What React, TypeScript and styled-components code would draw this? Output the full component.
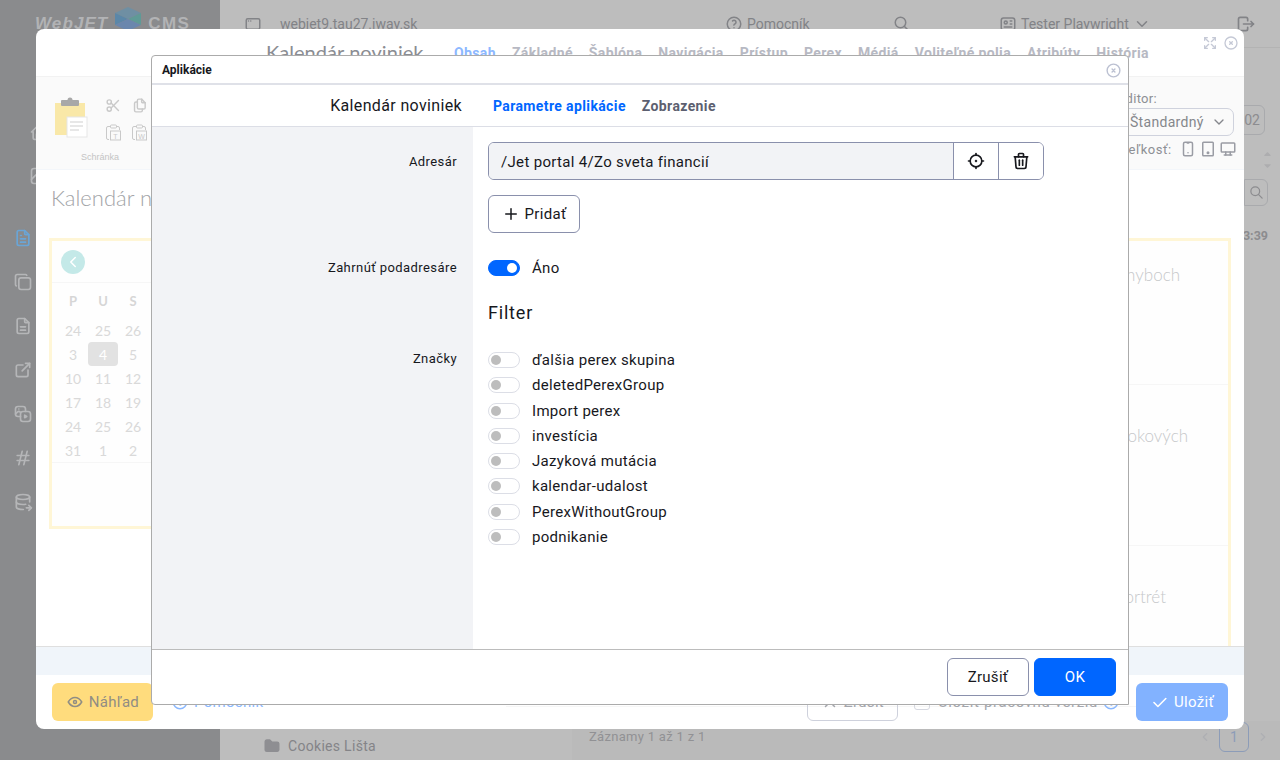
import { createGlobalStyle, styled } from "styled-components";
import {
  TbAppWindow,
  TbArrowsMaximize,
  TbCaretDownFilled,
  TbCaretUpFilled,
  TbCheck,
  TbChevronDown,
  TbChevronLeft,
  TbChevronRight,
  TbCircleX,
  TbCopy,
  TbDatabaseExport,
  TbDeviceDesktop,
  TbDeviceMobile,
  TbDeviceTablet,
  TbExternalLink,
  TbEye,
  TbFileDescription,
  TbFiles,
  TbFileText,
  TbFocus2,
  TbFolderFilled,
  TbHash,
  TbHelp,
  TbHome,
  TbId,
  TbInfoCircle,
  TbLogout,
  TbPhoto,
  TbPhotoVideo,
  TbPlus,
  TbScissors,
  TbSearch,
  TbTrash,
  TbX,
} from "react-icons/tb";

const UI_FONT = `Roboto, "Liberation Sans", sans-serif`;
const LIGHT_FONT = `Lato, "Liberation Sans", sans-serif`;

const GlobalStyle = createGlobalStyle`
  html, body {
    margin: 0;
    padding: 0;
    height: 760px;
    overflow: hidden;
    font-family: ${UI_FONT};
  }
  * { box-sizing: border-box; }
`;

const Page = styled.div`
  position: relative;
  width: 1280px;
  height: 760px;
  overflow: hidden;
  display: grid;
  grid-template-columns: 220px 1fr;
  background: #bdbdbd;
`;

/* ---------- page behind the dialogs ---------- */

const Sidebar = styled.aside`
  background: #8a8b8d;
  color: #b5b6b8;
  display: flex;
  flex-direction: column;
`;

const Logo = styled.div`
  height: 48px;
  padding-left: 35px;
  display: flex;
  align-items: center;
  gap: 6px;
  font-family: "Liberation Sans", sans-serif;
  font-size: 17px;
  font-weight: 700;
  color: #b2b3b5;
  svg {
    margin-top: -10px;
  }
`;

const LogoWord = styled.span`
  font-style: italic;
  letter-spacing: 1.1px;
`;

const LogoCms = styled.span`
  letter-spacing: 1.4px;
`;

const SideNav = styled.nav`
  display: flex;
  flex-direction: column;
  padding-top: 62px;
`;

const SideItem = styled.div<{ $indent?: boolean; $active?: boolean; $gap?: number }>`
  height: 44px;
  display: flex;
  align-items: center;
  padding-left: ${(p) => (p.$indent ? 29 : 13)}px;
  margin-bottom: ${(p) => p.$gap ?? 0}px;
  font-size: 20px;
  color: ${(p) => (p.$active ? "#6aa5d6" : "#b5b6b8")};
`;

const Main = styled.main`
  display: flex;
  flex-direction: column;
  min-width: 0;
`;

const TopBar = styled.header`
  height: 48px;
  flex-shrink: 0;
  display: flex;
  align-items: center;
  padding-left: 24px;
  font-size: 14px;
  color: #828387;
  border-bottom: 1px solid #b3b3b3;
`;

const TopItem = styled.div<{ $width: number }>`
  width: ${(p) => p.$width}px;
  flex-shrink: 0;
  display: flex;
  align-items: center;
  gap: 4px;
  svg {
    font-size: 18px;
    flex-shrink: 0;
  }
`;

const TopSpacedIcon = styled.span`
  width: 36px;
  display: flex;
`;

const BackTools = styled.div`
  flex: 1;
  display: flex;
  flex-direction: column;
  align-items: flex-end;
  padding: 57px 12px 0 0;
  color: #8c8c8f;
`;

const PageInput = styled.div`
  width: 26px;
  height: 30px;
  border: 1px solid #a9aaad;
  border-radius: 6px;
  margin-right: 3px;
  display: flex;
  align-items: center;
  justify-content: flex-end;
  padding-right: 4px;
  font-size: 14px;
`;

const SortArrows = styled.div`
  display: flex;
  flex-direction: column;
  font-size: 11px;
  line-height: 6px;
  color: #adadaf;
  margin: 14px -5px 8px 0;
  svg {
    display: block;
  }
`;

const SearchBox = styled.div`
  width: 24px;
  height: 27px;
  border: 1px solid #a9aaad;
  border-radius: 0 6px 6px 0;
  display: flex;
  align-items: center;
  justify-content: center;
  font-size: 15px;
`;

const TimeText = styled.div`
  margin-top: 22px;
  font-size: 12.5px;
  font-weight: 700;
`;

const BackFooter = styled.div`
  height: 39px;
  flex-shrink: 0;
  display: flex;
  color: #848488;
  font-size: 14px;
  letter-spacing: 0.3px;
`;

const FolderRow = styled.div`
  width: 352px;
  padding-left: 43px;
  padding-top: 10px;
  display: flex;
  align-items: center;
  gap: 7px;
  svg {
    font-size: 18px;
    color: #8e8e92;
  }
`;

const ListInfo = styled.div`
  flex: 1;
  display: flex;
  align-items: flex-start;
  background: #bababa;
`;

const RecordInfo = styled.div`
  padding: 8px 0 0 17px;
  line-height: 16px;
  font-size: 13px;
  color: #919194;
  flex: 1;
`;

const Pager = styled.div`
  display: flex;
  align-items: center;
  gap: 7px;
  padding: 1px 10px 0 0;
  color: #aeafb3;
`;

const PageNum = styled.div`
  width: 30px;
  height: 30px;
  border: 1px solid #8c9cb8;
  border-radius: 6px;
  color: #8c9cb8;
  display: flex;
  align-items: center;
  justify-content: center;
`;

/* ---------- page editor dialog ---------- */

const EditorDialog = styled.section`
  position: absolute;
  left: 36px;
  top: 29px;
  width: 1208px;
  height: 700px;
  background: #fff;
  border-radius: 8px;
  overflow: hidden;
  display: flex;
  flex-direction: column;
`;

const EditorHeader = styled.div`
  height: 47px;
  flex-shrink: 0;
  padding: 10px 5px 0 230px;
  display: flex;
  align-items: flex-start;
`;

const EditorTitle = styled.div`
  font-family: ${LIGHT_FONT};
  font-size: 20px;
  line-height: 26px;
  color: #8b8d93;
  letter-spacing: 0.05px;
  width: 188px;
`;

const EditorTabs = styled.div`
  display: flex;
  gap: 16px;
  padding-top: 6px;
  flex: 1;
`;

const EditorTab = styled.span<{ $active?: boolean }>`
  font-size: 14px;
  line-height: 16px;
  font-weight: 700;
  letter-spacing: 0.37px;
  white-space: nowrap;
  color: ${(p) => (p.$active ? "#8cb8ff" : "#b7b9c3")};
`;

const EditorHeadIcons = styled.div`
  display: flex;
  gap: 5px;
  margin-top: -4px;
  font-size: 16px;
  color: #c5c9d6;
  svg {
    display: block;
  }
`;

const Ribbon = styled.div`
  height: 94px;
  flex-shrink: 0;
  background: #fafafa;
  border-top: 1px solid #f2f2f2;
  border-bottom: 1px solid #f3f6fa;
  padding: 0 10px 0 19px;
  display: flex;
  justify-content: space-between;
`;

const ClipGroup = styled.div`
  display: grid;
  grid-template-columns: 32px 46px;
  column-gap: 18px;
  padding-top: 20px;
  width: 100px;
`;

const ClipActions = styled.div`
  display: grid;
  grid-template-columns: 26px 18px;
  row-gap: 10px;
  font-size: 17px;
  color: #c9c9c9;
  align-content: start;
  svg {
    display: block;
  }
`;

const ClipLabel = styled.div`
  grid-column: 1 / -1;
  font-family: "Liberation Sans", sans-serif;
  font-size: 9px;
  color: #c4c4c4;
  text-align: center;
  margin-top: 4px;
  padding-right: 6px;
`;

const EditorMode = styled.div`
  width: 124px;
  padding-top: 13px;
  font-size: 13px;
  letter-spacing: 0.3px;
  color: #8d8f94;
`;

const ModeLabel = styled.div`
  padding-left: 8px;
  line-height: 17px;
`;

const ModeSelect = styled.div`
  height: 28px;
  margin-top: 1px;
  border: 1px solid #cfd2dd;
  border-radius: 7px;
  padding: 0 6px 0 19px;
  display: flex;
  align-items: center;
  justify-content: space-between;
  color: #85878c;
  font-size: 14px;
  svg {
    font-size: 16px;
  }
`;

const SizeRow = styled.div`
  display: flex;
  align-items: center;
  gap: 2px;
  margin-top: 4px;
  padding-left: 10px;
  white-space: nowrap;
  svg {
    font-size: 18px;
    color: #9a9ca4;
    flex-shrink: 0;
  }
`;

const SizeText = styled.span`
  margin-right: 5px;
  letter-spacing: 0.55px;
`;

const EditorBody = styled.div`
  flex: 1;
  min-height: 0;
  padding: 16px 13px 0 13px;
  display: flex;
  flex-direction: column;
`;

const PageHeading = styled.h2`
  margin: 0;
  padding-left: 2px;
  font-family: ${LIGHT_FONT};
  font-weight: 300;
  font-size: 22px;
  line-height: 24px;
  color: #a2a4a7;
  white-space: nowrap;
`;

const Columns = styled.div`
  margin-top: 28px;
  flex: 1;
  min-height: 0;
  display: grid;
  grid-template-columns: 440px 1fr;
  gap: 14px;
  align-items: start;
`;

const Frame = styled.div<{ $height: number }>`
  height: ${(p) => p.$height}px;
  border: 3px solid #fff6d6;
  background: #fefefe;
`;

const ArticleFrame = styled(Frame)`
  border-bottom: 0;
`;

const CalendarNav = styled.div`
  height: 42px;
  border-bottom: 1px solid #f6f6f6;
  padding: 9px 0 0 9px;
`;

const PrevButton = styled.div`
  width: 24px;
  height: 24px;
  border-radius: 50%;
  background: #c4e9e8;
  color: #fff;
  font-size: 18px;
  display: flex;
  align-items: center;
  justify-content: center;
`;

const WeekGrid = styled.div`
  display: grid;
  grid-template-columns: repeat(3, 30px);
  padding: 0 0 0 6px;
  border-bottom: 1px solid #f6f6f6;
`;

const DayName = styled.div`
  height: 35px;
  display: flex;
  align-items: center;
  justify-content: center;
  font-family: ${LIGHT_FONT};
  font-weight: 700;
  font-size: 13px;
  color: #d6d6d6;
`;

const Day = styled.div<{ $today?: boolean }>`
  height: 24px;
  display: flex;
  align-items: center;
  justify-content: center;
  border-radius: 4px;
  font-family: ${LIGHT_FONT};
  font-weight: 400;
  font-size: 14px;
  color: ${(p) => (p.$today ? "#fff" : "#d9d9d9")};
  background: ${(p) => (p.$today ? "#e2e2e2" : "transparent")};
`;

const ArticleRow = styled.div<{ $height: number; $inset: number }>`
  height: ${(p) => p.$height}px;
  border-bottom: 1px solid #f6f6f6;
  padding: ${(p) => p.$height - 121}px ${(p) => p.$inset}px 0 0;
  text-align: right;
  font-family: ${LIGHT_FONT};
  font-weight: 300;
  font-size: 17px;
  line-height: 22px;
  color: #c6c8ca;
  white-space: nowrap;
`;

const EditorStrip = styled.div`
  height: 29px;
  flex-shrink: 0;
  background: #f0f5fa;
  border-top: 1px solid #dfdfdf;
`;

const EditorFooter = styled.div`
  height: 54px;
  flex-shrink: 0;
  padding: 8px 16px 0;
  display: flex;
  align-items: flex-start;
  font-size: 15px;
  letter-spacing: 0.3px;
`;

const PreviewButton = styled.div`
  width: 101px;
  height: 38px;
  border-radius: 6px;
  background: #ffdc7d;
  color: #908d84;
  display: flex;
  align-items: center;
  justify-content: center;
  gap: 5px;
  svg {
    font-size: 18px;
  }
`;

const HelpLink = styled.div`
  margin-left: 18px;
  height: 38px;
  display: flex;
  align-items: center;
  gap: 5px;
  color: #8ab8ff;
  flex: 1;
  svg {
    font-size: 18px;
  }
`;

const GhostButton = styled.div`
  width: 91px;
  height: 38px;
  border: 1px solid #ced1dc;
  border-radius: 6px;
  color: #a4a6ac;
  display: flex;
  align-items: center;
  justify-content: center;
  gap: 5px;
  svg {
    font-size: 18px;
  }
`;

const WorkCopy = styled.div`
  margin-left: 16px;
  width: 222px;
  height: 38px;
  display: flex;
  align-items: center;
  color: #a4a6ac;
  letter-spacing: 0.6px;
  white-space: nowrap;
  svg {
    font-size: 18px;
    color: #8ab8ff;
    margin-left: 4px;
  }
`;

const CheckBox = styled.span`
  width: 16px;
  height: 16px;
  border: 1px solid #d6d8e0;
  border-radius: 3px;
  margin-right: 8px;
  flex-shrink: 0;
`;

const SaveButton = styled.div`
  width: 92px;
  height: 38px;
  border-radius: 6px;
  background: #82b2ff;
  color: #fff;
  display: flex;
  align-items: center;
  justify-content: center;
  gap: 5px;
  svg {
    font-size: 19px;
  }
`;

/* ---------- application dialog ---------- */

const AppDialog = styled.section`
  position: absolute;
  left: 151px;
  top: 55px;
  width: 978px;
  height: 650px;
  background: #fff;
  border: 1px solid #ababab;
  border-radius: 4px 4px 0 4px;
  overflow: hidden;
  display: flex;
  flex-direction: column;
  color: #17181d;
`;

const AppHeader = styled.div`
  height: 29px;
  flex-shrink: 0;
  border-bottom: 2px solid #dfe1e8;
  padding: 1px 6px 0 10px;
  display: flex;
  align-items: center;
  justify-content: space-between;
`;

const AppTitle = styled.div`
  font-size: 12px;
  font-weight: 700;
`;

const AppClose = styled.div`
  font-size: 17px;
  color: #bcc1d2;
  display: flex;
`;

const AppTabBar = styled.div`
  height: 42px;
  flex-shrink: 0;
  border-bottom: 1px solid #dcdee6;
  display: grid;
  grid-template-columns: 321px 1fr;
  align-items: center;
`;

const AppTabTitle = styled.div`
  font-size: 16px;
  letter-spacing: 0.35px;
  text-align: right;
  padding-right: 11px;
`;

const AppTabs = styled.div`
  display: flex;
  gap: 16px;
  padding-left: 20px;
`;

const AppTab = styled.span<{ $active?: boolean }>`
  font-size: 14px;
  font-weight: 700;
  letter-spacing: 0.38px;
  color: ${(p) => (p.$active ? "#0066ff" : "#5c5f70")};
`;

const FormArea = styled.div`
  flex: 1;
  min-height: 0;
  display: grid;
  grid-template-columns: 321px 1fr;
  grid-auto-rows: min-content;
  background: linear-gradient(to right, #f2f3f6 321px, #fff 321px);
`;

const FieldLabel = styled.div<{ $top: number }>`
  padding: ${(p) => p.$top}px 16px 0 0;
  text-align: right;
  font-size: 13px;
  line-height: 18px;
  letter-spacing: 0.42px;
`;

const FieldCell = styled.div<{ $top: number }>`
  padding: ${(p) => p.$top}px 0 0 15px;
`;

const PathGroup = styled.div`
  width: 556px;
  height: 38px;
  border: 1px solid #8a90ac;
  border-radius: 6px;
  display: flex;
  overflow: hidden;
`;

const PathValue = styled.div`
  flex: 1;
  background: #f2f3f6;
  display: flex;
  align-items: center;
  padding: 1px 0 0 12px;
  font-size: 15px;
  letter-spacing: 0.32px;
`;

const PathAction = styled.div`
  width: 45px;
  border-left: 1px solid #8a90ac;
  background: #fff;
  display: flex;
  align-items: center;
  justify-content: center;
  font-size: 20px;
  color: #17181d;
`;

const AddButton = styled.div`
  margin-top: 15px;
  width: 92px;
  height: 38px;
  border: 1px solid #8a90ac;
  border-radius: 6px;
  display: flex;
  align-items: center;
  justify-content: center;
  gap: 5px;
  font-size: 15px;
  letter-spacing: 0.3px;
  svg {
    font-size: 18px;
  }
`;

const SwitchRow = styled.div`
  height: 25.3px;
  display: flex;
  align-items: center;
  gap: 12px;
  font-size: 15px;
  letter-spacing: 0.3px;
`;

const Track = styled.span<{ $on?: boolean }>`
  position: relative;
  width: 32px;
  height: 16px;
  flex-shrink: 0;
  border-radius: 8px;
  background: ${(p) => (p.$on ? "#0066ff" : "#fff")};
  border: 1px solid ${(p) => (p.$on ? "#0066ff" : "#dcdee6")};
`;

const Thumb = styled.span<{ $on?: boolean }>`
  position: absolute;
  top: 2px;
  left: ${(p) => (p.$on ? 18 : 2)}px;
  width: 10px;
  height: 10px;
  border-radius: 50%;
  background: ${(p) => (p.$on ? "#fff" : "#bdbdbd")};
`;

const SectionTitle = styled.h3`
  grid-column: 2;
  margin: 0;
  padding: 20px 0 0 15px;
  font-size: 18px;
  line-height: 26px;
  font-weight: 400;
  letter-spacing: 0.8px;
`;

const AppFooter = styled.div`
  height: 55px;
  flex-shrink: 0;
  border-top: 1px solid #bcbcbc;
  padding: 8px 12px 0 0;
  display: flex;
  justify-content: flex-end;
  gap: 5px;
`;

const DialogButton = styled.div<{ $primary?: boolean }>`
  width: 82px;
  height: 38px;
  border-radius: 6px;
  border: 1px solid ${(p) => (p.$primary ? "#0066ff" : "#8a90ac")};
  background: ${(p) => (p.$primary ? "#0066ff" : "#fff")};
  color: ${(p) => (p.$primary ? "#fff" : "#17181d")};
  display: flex;
  align-items: center;
  justify-content: center;
  font-size: 15px;
  letter-spacing: 0.3px;
`;

/* drawings */

function LogoCube() {
  return (
    <svg width="28" height="24" viewBox="0 0 28 24" aria-hidden="true">
      <polygon points="14,0 27,6 14,12 1,6" fill="#6f8fa3" />
      <polygon points="1,6 14,12 1,18" fill="#5b87a8" />
      <polygon points="27,6 14,12 27,18" fill="#5f9a96" />
      <polygon points="14,12 27,18 14,24 1,18" fill="#6b87ad" />
    </svg>
  );
}

function ClipboardArt() {
  return (
    <svg width="34" height="42" viewBox="0 0 34 42" aria-hidden="true">
      <rect x="0" y="6" width="30" height="32" fill="#f9e8a8" />
      <rect x="6" y="3" width="18" height="6" rx="1" fill="#a8a8a8" />
      <circle cx="15" cy="3" r="2.5" fill="#a8a8a8" />
      <rect x="12" y="20" width="20" height="20" fill="#fff" stroke="#e6e6e6" />
      <path d="M15 25h13M15 29h13M15 33h9" stroke="#cfcfcf" strokeWidth="1.2" />
    </svg>
  );
}

function PasteIcon({ letter }: { letter: string }) {
  return (
    <svg width="17" height="17" viewBox="0 0 17 17" fill="none" stroke="currentColor" aria-hidden="true">
      <path d="M5 2.5H3a1.5 1.5 0 0 0-1.5 1.5v10A1.5 1.5 0 0 0 3 15.5h1M12 2.5h1A1.5 1.5 0 0 1 14.5 4v2" />
      <rect x="5.5" y="1" width="6" height="3" rx="1" />
      <rect x="5.5" y="7" width="10" height="9" />
      <text x="10.5" y="14.5" fontSize="7" textAnchor="middle" fill="currentColor" stroke="none" fontFamily="Liberation Sans">
        {letter}
      </text>
    </svg>
  );
}

const WEEKS = [
  ["24", "25", "26"],
  ["3", "4", "5"],
  ["10", "11", "12"],
  ["17", "18", "19"],
  ["24", "25", "26"],
  ["31", "1", "2"],
];

const TAGS = [
  "ďalšia perex skupina",
  "deletedPerexGroup",
  "Import perex",
  "investícia",
  "Jazyková mutácia",
  "kalendar-udalost",
  "PerexWithoutGroup",
  "podnikanie",
];

const EDITOR_TABS = [
  "Základné",
  "Šablóna",
  "Navigácia",
  "Prístup",
  "Perex",
  "Médiá",
  "Voliteľné polia",
  "Atribúty",
  "História",
];

export default function App() {
  return (
    <Page>
      <GlobalStyle />
      <Sidebar>
        <Logo>
          <LogoWord>WebJET</LogoWord>
          <LogoCube />
          <LogoCms>CMS</LogoCms>
        </Logo>
        <SideNav>
          <SideItem $indent><TbHome /></SideItem>
          <SideItem $indent $gap={18}><TbPhoto /></SideItem>
          <SideItem $active><TbFileText /></SideItem>
          <SideItem><TbCopy /></SideItem>
          <SideItem><TbFileDescription /></SideItem>
          <SideItem><TbExternalLink /></SideItem>
          <SideItem><TbPhotoVideo /></SideItem>
          <SideItem><TbHash /></SideItem>
          <SideItem><TbDatabaseExport /></SideItem>
        </SideNav>
      </Sidebar>

      <Main>
        <TopBar>
          <TopSpacedIcon><TbAppWindow size={18} /></TopSpacedIcon>
          <TopItem $width={445}>webjet9.tau27.iway.sk</TopItem>
          <TopItem $width={168}><TbHelp />Pomocník</TopItem>
          <TopItem $width={106}><TbSearch /></TopItem>
          <TopItem $width={237}><TbId />Tester Playwright<TbChevronDown /></TopItem>
          <TbLogout size={20} />
        </TopBar>
        <BackTools>
          <PageInput>02</PageInput>
          <SortArrows>
            <TbCaretUpFilled />
            <TbCaretDownFilled />
          </SortArrows>
          <SearchBox><TbSearch /></SearchBox>
          <TimeText>3:39</TimeText>
        </BackTools>
        <BackFooter>
          <FolderRow><TbFolderFilled />Cookies Lišta</FolderRow>
          <ListInfo>
            <RecordInfo>Záznamy 1 až 1 z 1</RecordInfo>
            <Pager>
              <TbChevronLeft />
              <PageNum>1</PageNum>
              <TbChevronRight />
            </Pager>
          </ListInfo>
        </BackFooter>
      </Main>

      <EditorDialog>
        <EditorHeader>
          <EditorTitle>Kalendár noviniek</EditorTitle>
          <EditorTabs>
            <EditorTab $active>Obsah</EditorTab>
            {EDITOR_TABS.map((tab) => (
              <EditorTab key={tab}>{tab}</EditorTab>
            ))}
          </EditorTabs>
          <EditorHeadIcons>
            <TbArrowsMaximize />
            <TbCircleX />
          </EditorHeadIcons>
        </EditorHeader>

        <Ribbon>
          <ClipGroup>
            <ClipboardArt />
            <ClipActions>
              <TbScissors />
              <TbFiles />
              <PasteIcon letter="T" />
              <PasteIcon letter="W" />
            </ClipActions>
            <ClipLabel>Schránka</ClipLabel>
          </ClipGroup>
          <EditorMode>
            <ModeLabel>Editor:</ModeLabel>
            <ModeSelect>Štandardný<TbChevronDown /></ModeSelect>
            <SizeRow>
              <SizeText>Veľkosť:</SizeText>
              <TbDeviceMobile />
              <TbDeviceTablet />
              <TbDeviceDesktop />
            </SizeRow>
          </EditorMode>
        </Ribbon>

        <EditorBody>
          <PageHeading>Kalendár noviniek</PageHeading>
          <Columns>
            <Frame $height={291}>
              <CalendarNav>
                <PrevButton><TbChevronLeft /></PrevButton>
              </CalendarNav>
              <WeekGrid>
                {["P", "U", "S"].map((d) => (
                  <DayName key={d}>{d}</DayName>
                ))}
                {WEEKS.flat().map((day, i) => (
                  <Day key={i} $today={day === "4"}>{day}</Day>
                ))}
              </WeekGrid>
            </Frame>
            <ArticleFrame $height={410}>
              <ArticleRow $height={144} $inset={48}>O investičných chyboch</ArticleRow>
              <ArticleRow $height={161} $inset={40}>Trh akciových a tokových</ArticleRow>
              <ArticleRow $height={161} $inset={62}>Investičný portrét</ArticleRow>
            </ArticleFrame>
          </Columns>
        </EditorBody>

        <EditorStrip />
        <EditorFooter>
          <PreviewButton><TbEye />Náhľad</PreviewButton>
          <HelpLink><TbInfoCircle />Pomocník</HelpLink>
          <GhostButton><TbX />Zrušiť</GhostButton>
          <WorkCopy>
            <CheckBox />
            Uložiť pracovnú verziu
            <TbInfoCircle />
          </WorkCopy>
          <SaveButton><TbCheck />Uložiť</SaveButton>
        </EditorFooter>
      </EditorDialog>

      <AppDialog>
        <AppHeader>
          <AppTitle>Aplikácie</AppTitle>
          <AppClose><TbCircleX /></AppClose>
        </AppHeader>
        <AppTabBar>
          <AppTabTitle>Kalendár noviniek</AppTabTitle>
          <AppTabs>
            <AppTab $active>Parametre aplikácie</AppTab>
            <AppTab>Zobrazenie</AppTab>
          </AppTabs>
        </AppTabBar>
        <FormArea>
          <FieldLabel $top={26}>Adresár</FieldLabel>
          <FieldCell $top={15}>
            <PathGroup>
              <PathValue>/Jet portal 4/Zo sveta financií</PathValue>
              <PathAction><TbFocus2 /></PathAction>
              <PathAction><TbTrash /></PathAction>
            </PathGroup>
            <AddButton><TbPlus />Pridať</AddButton>
          </FieldCell>
          <FieldLabel $top={26}>Zahrnúť podadresáre</FieldLabel>
          <FieldCell $top={22}>
            <SwitchRow>
              <Track $on><Thumb $on /></Track>
              Áno
            </SwitchRow>
          </FieldCell>
          <SectionTitle>Filter</SectionTitle>
          <FieldLabel $top={24}>Značky</FieldLabel>
          <FieldCell $top={21}>
            {TAGS.map((tag) => (
              <SwitchRow key={tag}>
                <Track><Thumb /></Track>
                {tag}
              </SwitchRow>
            ))}
          </FieldCell>
        </FormArea>
        <AppFooter>
          <DialogButton>Zrušiť</DialogButton>
          <DialogButton $primary>OK</DialogButton>
        </AppFooter>
      </AppDialog>
    </Page>
  );
}
